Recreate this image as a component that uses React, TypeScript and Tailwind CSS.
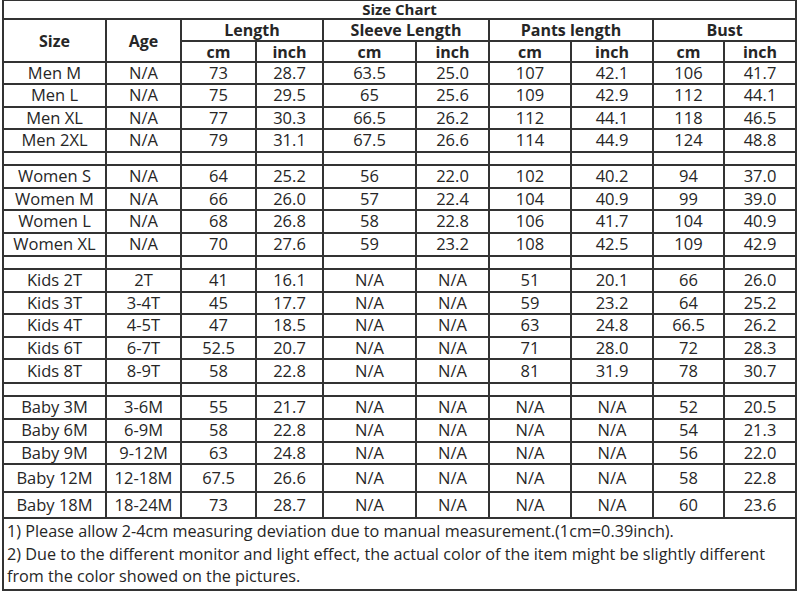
import React from "react";

type Row = { cells: string[]; h: number } | { blank: true; h: number };

const rows: Row[] = [
  { cells: ["Men M", "N/A", "73", "28.7", "63.5", "25.0", "107", "42.1", "106", "41.7"], h: 22 },
  { cells: ["Men L", "N/A", "75", "29.5", "65", "25.6", "109", "42.9", "112", "44.1"], h: 23 },
  { cells: ["Men XL", "N/A", "77", "30.3", "66.5", "26.2", "112", "44.1", "118", "46.5"], h: 22 },
  { cells: ["Men 2XL", "N/A", "79", "31.1", "67.5", "26.6", "114", "44.9", "124", "48.8"], h: 23 },
  { blank: true, h: 13 },
  { cells: ["Women S", "N/A", "64", "25.2", "56", "22.0", "102", "40.2", "94", "37.0"], h: 23 },
  { cells: ["Women M", "N/A", "66", "26.0", "57", "22.4", "104", "40.9", "99", "39.0"], h: 22 },
  { cells: ["Women L", "N/A", "68", "26.8", "58", "22.8", "106", "41.7", "104", "40.9"], h: 23 },
  { cells: ["Women XL", "N/A", "70", "27.6", "59", "23.2", "108", "42.5", "109", "42.9"], h: 23 },
  { blank: true, h: 13 },
  { cells: ["Kids 2T", "2T", "41", "16.1", "N/A", "N/A", "51", "20.1", "66", "26.0"], h: 23 },
  { cells: ["Kids 3T", "3-4T", "45", "17.7", "N/A", "N/A", "59", "23.2", "64", "25.2"], h: 22 },
  { cells: ["Kids 4T", "4-5T", "47", "18.5", "N/A", "N/A", "63", "24.8", "66.5", "26.2"], h: 23 },
  { cells: ["Kids 6T", "6-7T", "52.5", "20.7", "N/A", "N/A", "71", "28.0", "72", "28.3"], h: 22 },
  { cells: ["Kids 8T", "8-9T", "58", "22.8", "N/A", "N/A", "81", "31.9", "78", "30.7"], h: 24 },
  { blank: true, h: 13 },
  { cells: ["Baby 3M", "3-6M", "55", "21.7", "N/A", "N/A", "N/A", "N/A", "52", "20.5"], h: 23 },
  { cells: ["Baby 6M", "6-9M", "58", "22.8", "N/A", "N/A", "N/A", "N/A", "54", "21.3"], h: 23 },
  { cells: ["Baby 9M", "9-12M", "63", "24.8", "N/A", "N/A", "N/A", "N/A", "56", "22.0"], h: 22 },
  { cells: ["Baby 12M", "12-18M", "67.5", "26.6", "N/A", "N/A", "N/A", "N/A", "58", "22.8"], h: 28 },
  { cells: ["Baby 18M", "18-24M", "73", "28.7", "N/A", "N/A", "N/A", "N/A", "60", "23.6"], h: 26 },
];

const colWidths = [103, 75, 75, 67, 93, 73, 82, 82, 71, 72];

const cell = "border-2 border-[#333] text-center align-middle p-0 leading-none";

export default function App() {
  return (
    <div
      className="w-[800px] h-[591px] bg-white overflow-hidden text-[#262626]"
      style={{ fontFamily: '"Open Sans", "Noto Sans", sans-serif' }}
    >
      <table className="ml-[2px] -mt-[1px] w-[794px] table-fixed border-collapse text-[16px]">
        <colgroup>
          {colWidths.map((w, i) => (
            <col key={i} style={{ width: w }} />
          ))}
        </colgroup>
        <thead>
          {/* title */}
          <tr className="h-[19px]">
            <th colSpan={10} className={`${cell} text-[15px] font-bold`}>
              Size Chart
            </th>
          </tr>
          <tr className="h-[22px]">
            <th rowSpan={2} className={`${cell} font-bold`}>Size</th>
            <th rowSpan={2} className={`${cell} font-bold`}>Age</th>
            <th colSpan={2} className={`${cell} font-bold`}>Length</th>
            <th colSpan={2} className={`${cell} font-bold`}>Sleeve Length</th>
            <th colSpan={2} className={`${cell} font-bold`}>Pants length</th>
            <th colSpan={2} className={`${cell} font-bold`}>Bust</th>
          </tr>
          <tr className="h-[21px]">
            {["cm", "inch", "cm", "inch", "cm", "inch", "cm", "inch"].map((t, i) => (
              <th key={i} className={`${cell} font-bold`}>{t}</th>
            ))}
          </tr>
        </thead>
        <tbody className="text-[16.5px]">
          {rows.map((r, i) =>
            "blank" in r ? (
              <tr key={i} style={{ height: r.h }}>
                {colWidths.map((_, j) => (
                  <td key={j} className={cell} />
                ))}
              </tr>
            ) : (
              <tr key={i} style={{ height: r.h }}>
                {r.cells.map((c, j) => (
                  <td key={j} className={cell}>{c}</td>
                ))}
              </tr>
            )
          )}
          <tr className="h-[72px]">
            <td colSpan={10} className="border-2 border-[#333] align-top pl-[3px] pt-[1px] text-[16.2px] leading-[22.5px]">
              <p>1) Please allow 2-4cm measuring deviation due to manual measurement.(1cm=0.39inch).</p>
              <p>2) Due to the different monitor and light effect, the actual color of the item might be slightly different</p>
              <p>from the color showed on the pictures.</p>
            </td>
          </tr>
        </tbody>
      </table>
    </div>
  );
}
